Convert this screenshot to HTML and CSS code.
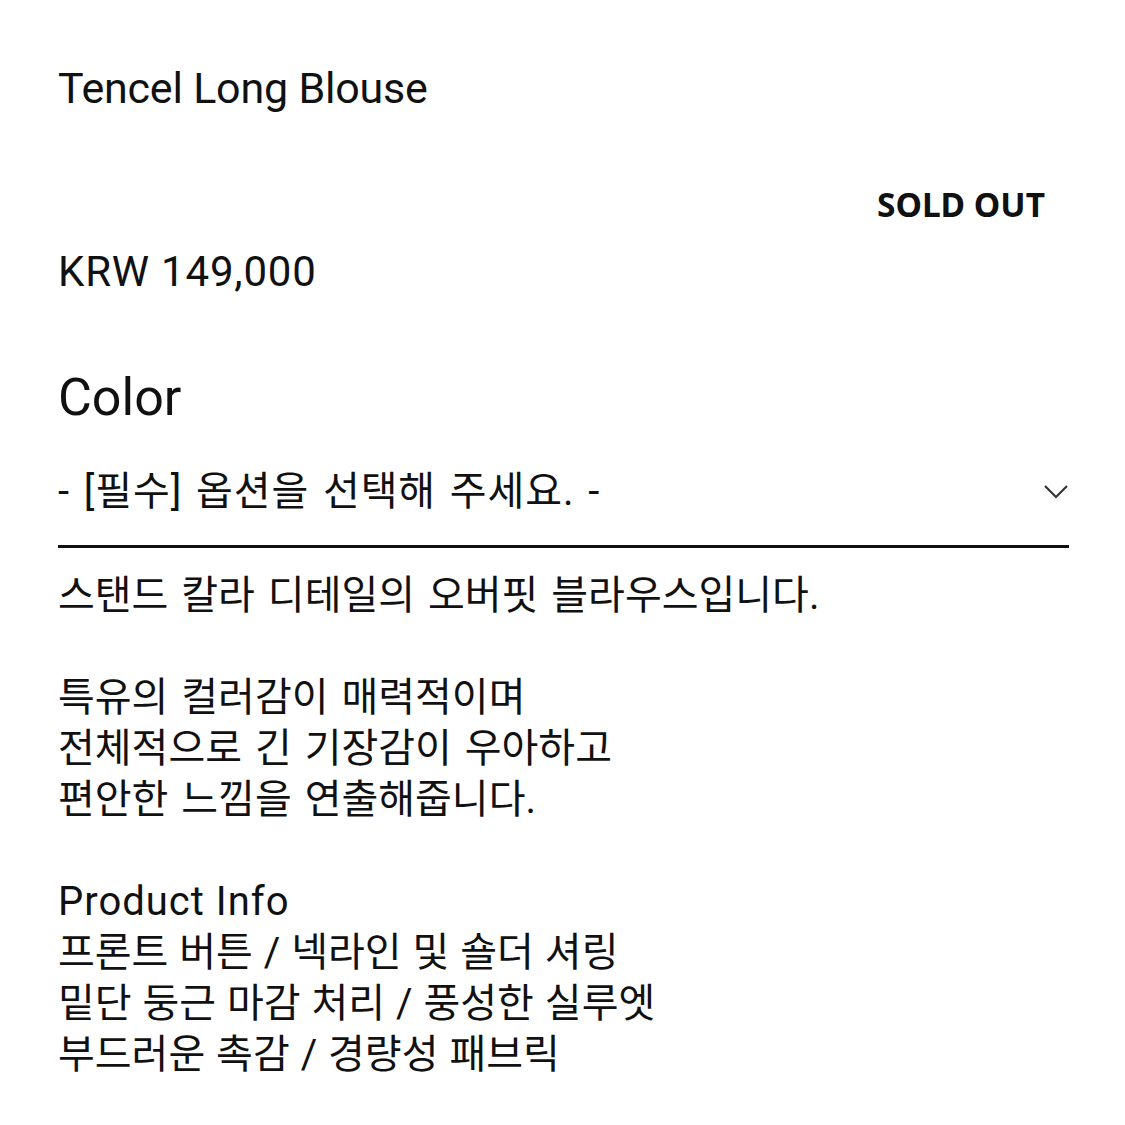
FILE: index.html
```html
<!DOCTYPE html>
<html lang="ko">
<head>
<meta charset="utf-8">
<link rel="stylesheet" href="styles.css">
</head>
<body>
<div class="page">
  <h1 class="title">Tencel Long Blouse</h1>
  <div class="status">SOLD OUT</div>
  <div class="price">KRW 149,000</div>
  <div class="option-label">Color</div>
  <div class="select">
    <span class="select-text">- [필수] 옵션을 선택해 주세요. -</span>
    <svg class="chevron" width="26" height="16" viewBox="0 0 26 16"><path d="M2 2 L13 13 L24 2" fill="none" stroke="#333" stroke-width="2.2"/></svg>
  </div>
  <div class="desc">
    <p class="ko">스탠드 칼라 디테일의 오버핏 블라우스입니다.</p>
    <p class="blank">&nbsp;</p>
    <p class="ko">특유의 컬러감이 매력적이며</p>
    <p class="ko">전체적으로 긴 기장감이 우아하고</p>
    <p class="ko">편안한 느낌을 연출해줍니다.</p>
    <p class="blank">&nbsp;</p>
    <p class="en">Product Info</p>
    <p class="info">프론트 버튼 / 넥라인 및 숄더 셔링</p>
    <p class="info">밑단 둥근 마감 처리 / 풍성한 실루엣</p>
    <p class="info">부드러운 촉감 / 경량성 패브릭</p>
  </div>
</div>
</body>
</html>
```

FILE: styles.css
```css
html, body {
  margin: 0;
  padding: 0;
  background: #fff;
}
body {
  font-family: Roboto, "Noto Sans CJK KR", sans-serif;
  color: #111;
}
.page {
  padding: 62px 56px 0 58px;
}
.title {
  margin: 0;
  font-weight: 400;
  font-size: 43px;
  line-height: 52px;
  letter-spacing: -0.2px;
}
.status {
  margin-top: 70px;
  text-align: right;
  padding-right: 24px;
  font-family: "Noto Sans", sans-serif;
  font-weight: 700;
  font-size: 33.5px;
  line-height: 40px;
}
.price {
  margin-top: 24px;
  font-size: 42px;
  line-height: 48px;
  letter-spacing: 0.8px;
}
.option-label {
  margin-top: 72px;
  font-size: 52px;
  line-height: 60px;
}
.select {
  margin-top: 36px;
  display: flex;
  align-items: center;
  justify-content: space-between;
  padding-bottom: 25px;
  border-bottom: 3px solid #111;
}
.select-text {
  font-size: 40px;
  line-height: 56px;
  letter-spacing: 0.9px;
  word-spacing: 3px;
}
.desc {
  margin-top: 22px;
  font-size: 40px;
  line-height: 51px;
}
.desc p {
  margin: 0;
}
.desc .ko {
  word-spacing: 3px;
}
.desc .info {
  word-spacing: 1px;
}
.desc .en {
  letter-spacing: 1px;
}
```
